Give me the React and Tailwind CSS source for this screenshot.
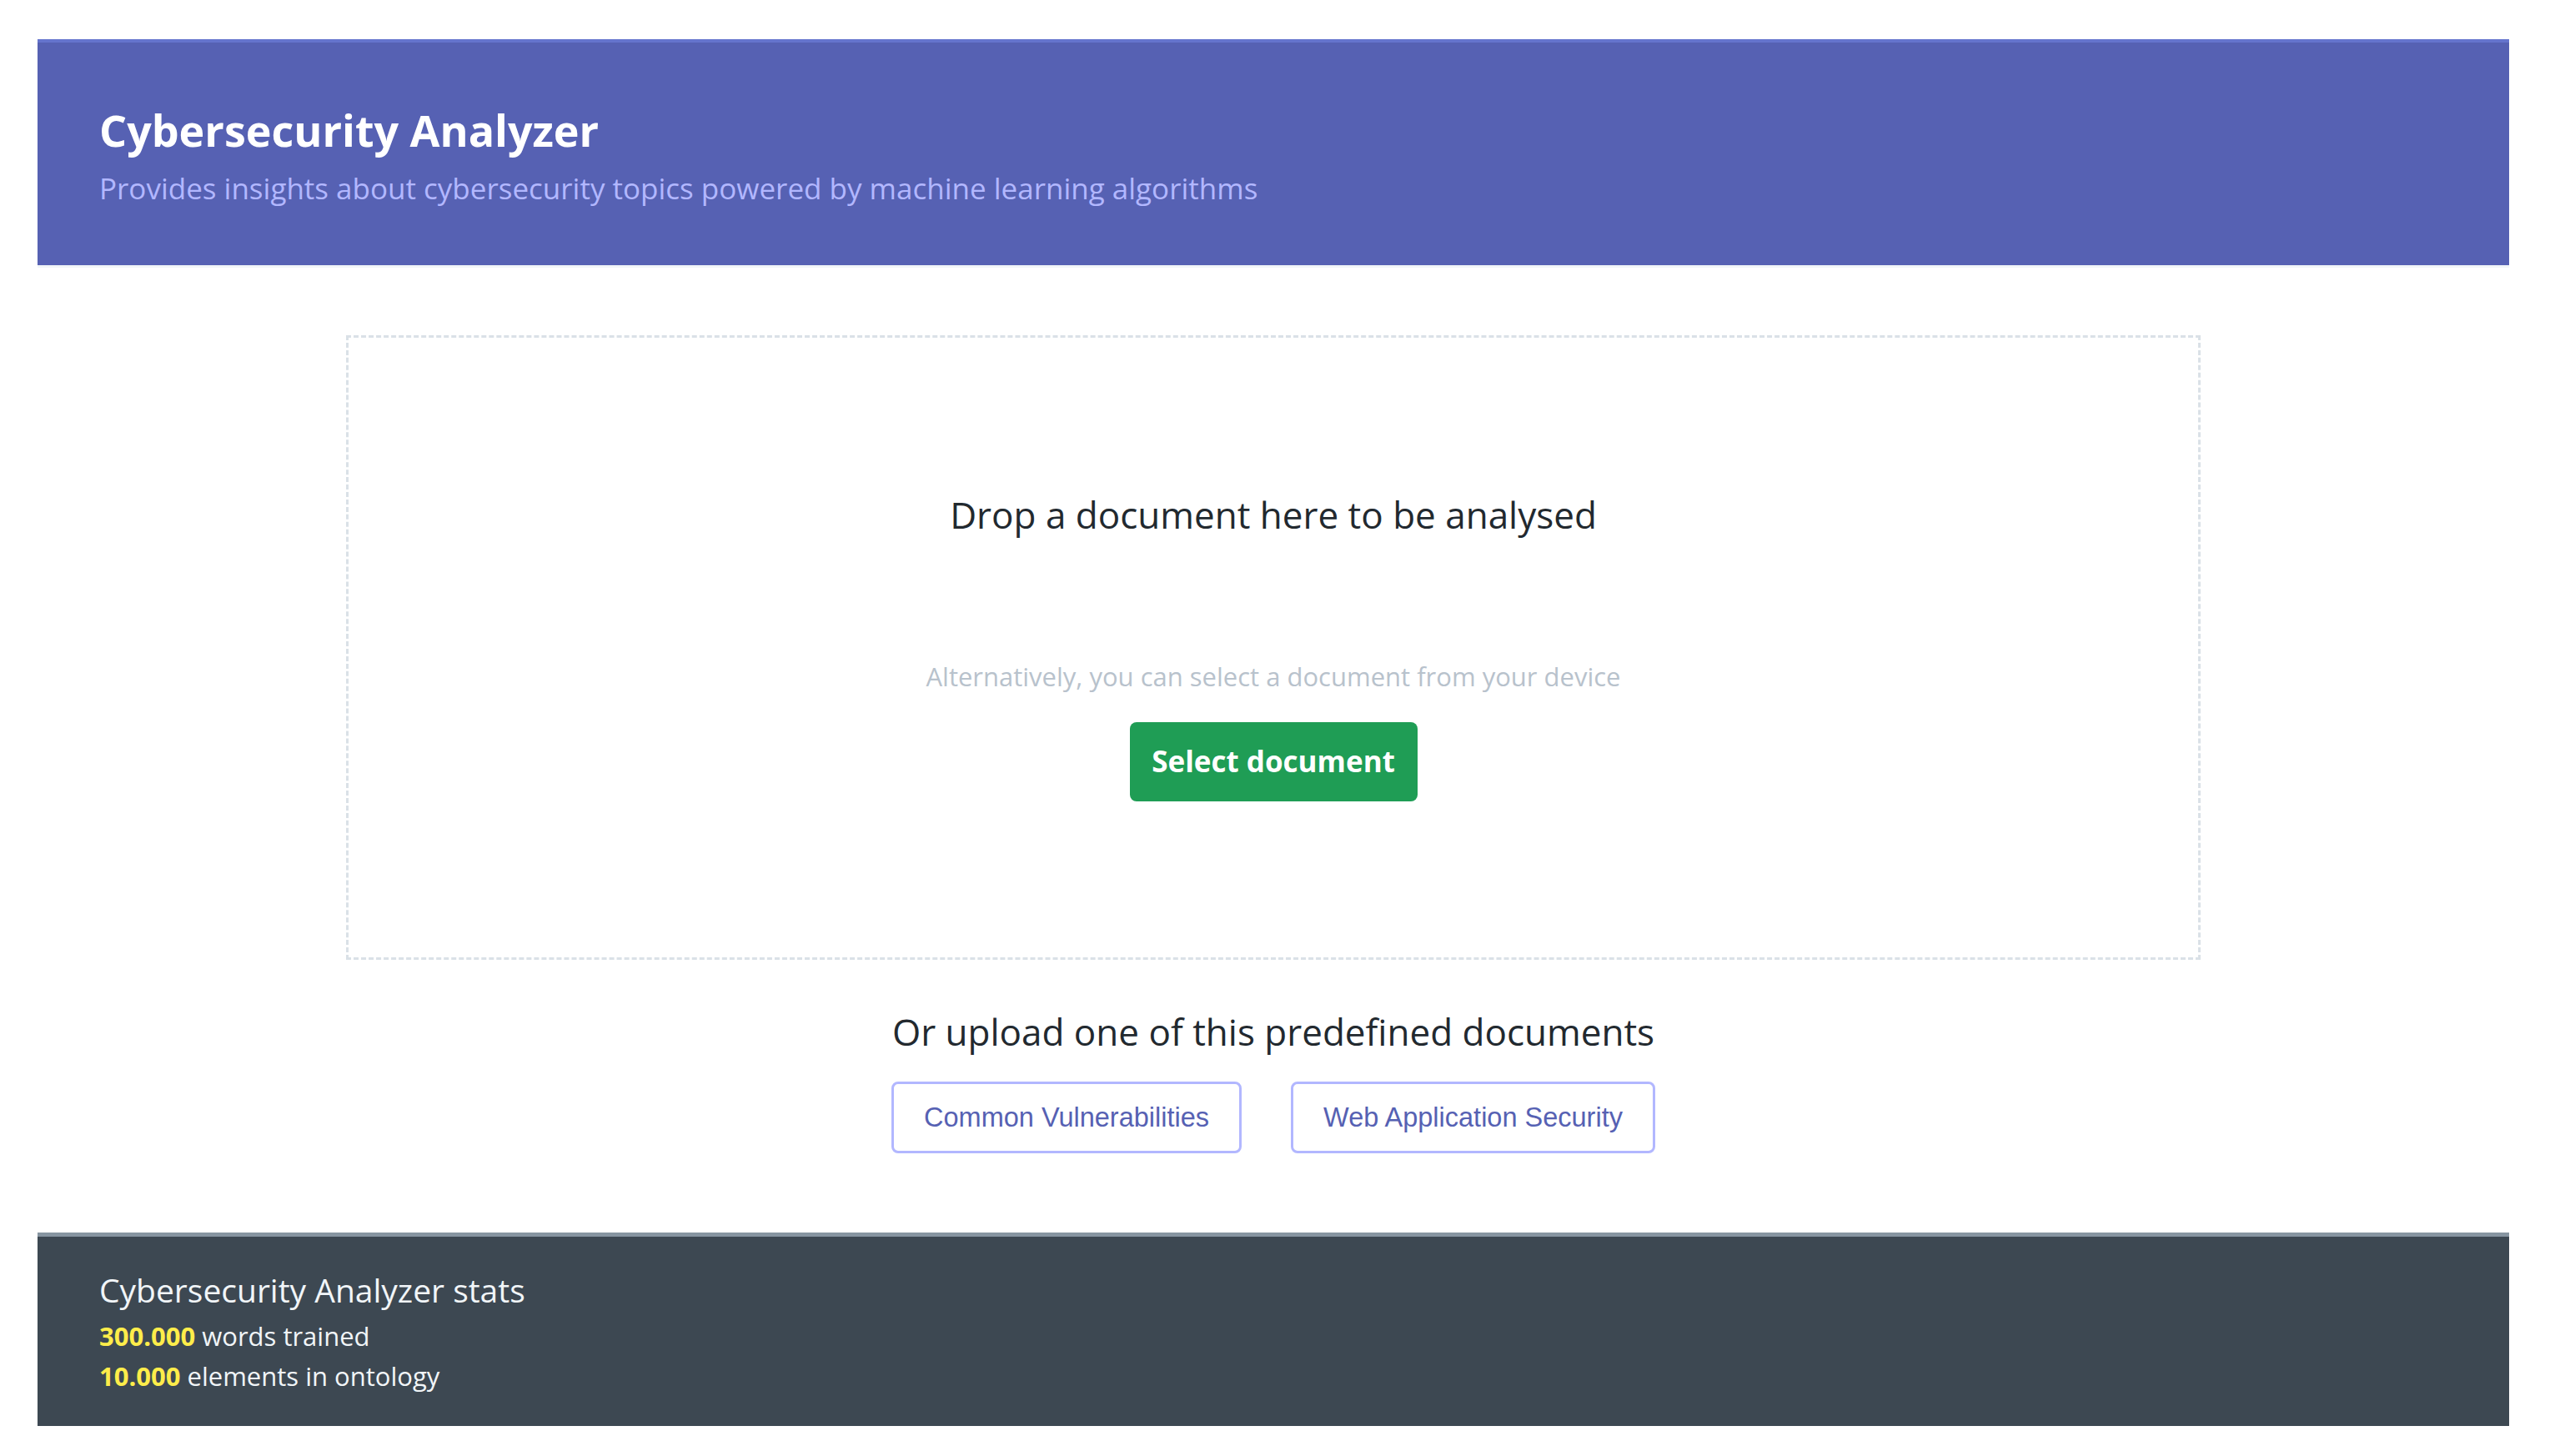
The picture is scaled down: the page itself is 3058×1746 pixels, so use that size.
import React from 'react';

const presets = ['Common Vulnerabilities', 'Web Application Security'];

const App = () => {
  return (
    <div className="min-h-screen bg-white pt-[47px] pb-[36px] pl-[45px] pr-[49px] font-['Open_Sans',sans-serif]">
      <header className="h-[271px] bg-[#5661b3] border-t-4 border-[#6574cd] px-[74px] pt-[74px]">
        <h1 className="text-[52px] leading-[62px] font-bold text-white">Cybersecurity Analyzer</h1>
        <p className="text-[35px] leading-[46px] mt-[16px] text-[#b2b7ff]">
          Provides insights about cybersecurity topics powered by machine learning algorithms
        </p>
      </header>
      <div className="h-[3px] bg-[#f1f5f8]" />

      <main className="flex flex-col items-center pt-[81px]">
        <div className="w-[2224px] h-[749px] border-[3px] border-dashed border-[#dae1e7] flex flex-col items-center pt-[184px]">
          <h2 className="text-[44px] leading-[56px] text-[#22292f]">Drop a document here to be analysed</h2>
          <p className="mt-[146px] text-[31px] leading-[40px] text-[#b8c2cc]">
            Alternatively, you can select a document from your device
          </p>
          <button
            type="button"
            className="mt-[35px] w-[345px] h-[95px] rounded-lg bg-[#1f9d55] text-white text-[35px] font-bold"
          >
            Select document
          </button>
        </div>

        <h3 className="mt-[58px] text-[44px] leading-[56px] text-[#22292f]">
          Or upload one of this predefined documents
        </h3>
        <div className="mt-[32px] flex gap-[59px]">
          {presets.map((name) => (
            <button
              key={name}
              type="button"
              className="h-[86px] px-[36px] rounded-lg border-[3px] border-[#b2b7ff] bg-white text-[#5661b3] text-[32.5px] font-['Liberation_Sans',sans-serif]"
            >
              {name}
            </button>
          ))}
        </div>
      </main>

      <footer className="mt-[95px] h-[232px] bg-[#3d4852] border-t-[5px] border-[#8795a1] px-[74px] pt-[38px] text-[#f1f5f8]">
        <p className="text-[39px] leading-[52px]">Cybersecurity Analyzer stats</p>
        <p className="text-[31px] leading-[49px] mt-[5px]">
          <span className="font-bold text-[#ffed4a]">300.000</span> words trained
        </p>
        <p className="text-[31px] leading-[46px]">
          <span className="font-bold text-[#ffed4a]">10.000</span> elements in ontology
        </p>
      </footer>
    </div>
  );
};

export default App;
